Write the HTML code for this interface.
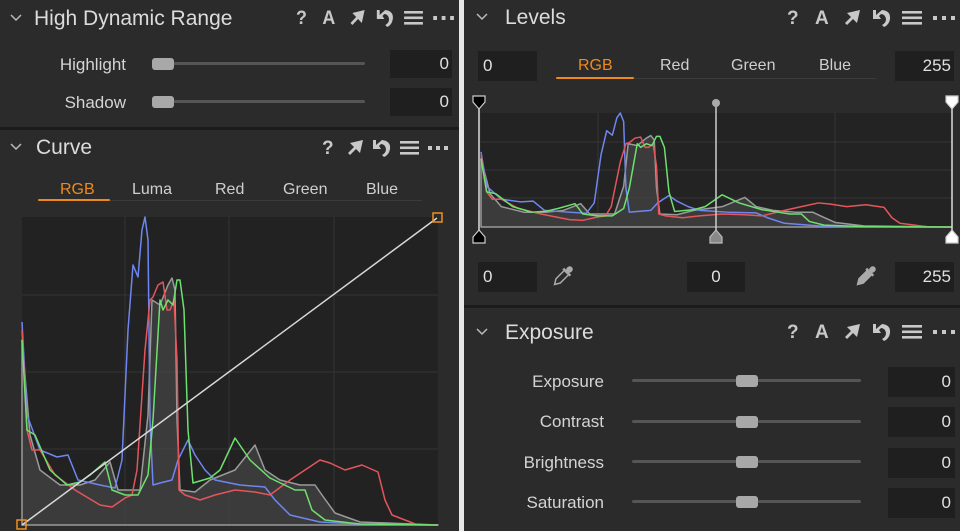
<!DOCTYPE html>
<html><head><meta charset="utf-8"><style>
*{margin:0;padding:0;box-sizing:border-box}
body{width:960px;height:531px;background:#2b2b2b;position:relative;overflow:hidden;font-family:"Liberation Sans",sans-serif;color:#d4d4d4}
.a{position:absolute;white-space:nowrap}
.h{font-size:21px;color:#dcdcdc;line-height:24px}
.l{font-size:17px;line-height:20px;text-align:right}
.box{position:absolute;background:#1f1f1f;font-size:17px;line-height:30px;color:#e0e0e0}
.tab{font-size:16px;line-height:20px;color:#cfcfcf}
.trk{position:absolute;height:3px;background:#555;border-radius:2px}
.hdl{position:absolute;width:22px;height:12px;background:#a8a8a8;border-radius:3px}
</style></head><body>
<div class="a" style="left:459px;top:0;width:5px;height:531px;background:#e6e6e6"></div>
<div class="a" style="left:0;top:127px;width:459px;height:3px;background:#1b1b1b"></div>
<div class="a" style="left:464px;top:305px;width:496px;height:3px;background:#1b1b1b"></div>

<svg class="a" style="left:0;top:0" width="960" height="531" viewBox="0 0 960 531">
<defs>
<g id="ic" fill="#c8c8c8">
  <text x="0" y="7" font-family="Liberation Sans" font-weight="bold" font-size="19" fill="#c8c8c8">?</text>
  <text x="28" y="7" font-family="Liberation Sans" font-weight="bold" font-size="19" fill="#c8c8c8">A</text>
  <path d="M58 6 L64 0 L60 -4 L73 -7 L70 6 L66 2 L60 8 Z"/>
  <path d="M86 -7 h3 v5 l6 -5 q9 1 8 9 q-1 6 -6 8 l-2 -2 q4 -2 4 -6 q-1 -5 -5 -5 l-2 2 l2 3 h-8 z"/>
  <rect x="115" y="-6" width="20" height="2.6"/><rect x="115" y="-0.5" width="20" height="2.6"/><rect x="115" y="5" width="20" height="2.6"/>
  <rect x="146" y="-1" width="4" height="4"/><rect x="155" y="-1" width="4" height="4"/><rect x="164" y="-1" width="4" height="4"/>
</g>
<g id="ic2" fill="#c8c8c8">
  <text x="0" y="7" font-family="Liberation Sans" font-weight="bold" font-size="19" fill="#c8c8c8">?</text>
  <path d="M26 6 L32 0 L28 -4 L41 -7 L38 6 L34 2 L28 8 Z"/>
  <path d="M51 -7 h3 v5 l6 -5 q9 1 8 9 q-1 6 -6 8 l-2 -2 q4 -2 4 -6 q-1 -5 -5 -5 l-2 2 l2 3 h-8 z"/>
  <rect x="78" y="-6" width="19" height="2.6"/><rect x="78" y="-0.5" width="19" height="2.6"/><rect x="78" y="5" width="19" height="2.6"/>
  <rect x="106" y="-1" width="4" height="4"/><rect x="114" y="-1" width="4" height="4"/><rect x="122" y="-1" width="4" height="4"/>
</g>
<g id="hist" fill="none" stroke-width="1.5" stroke-linejoin="round">
  <path vector-effect="non-scaling-stroke" fill="#444" fill-opacity="0.75" stroke="#9a9a9a" d="M22,340 L30,435 L40,470 L60,485 L80,485 L95,480 L110,462 L118,490 L140,490 L148,415 L152,300 L160,305 L168,285 L172,278 L175,290 L177,420 L180,490 L195,492 L210,480 L235,470 L255,445 L265,470 L280,480 L300,485 L315,485 L322,495 L335,513 L360,522 L438,525 L22,525 Z"/>
  <path vector-effect="non-scaling-stroke" stroke="#6f86f0" d="M22,322 L27,415 L40,450 L57,457 L68,455 L78,480 L100,485 L115,488 L122,460 L128,330 L133,265 L138,277 L142,230 L145,217 L148,240 L150,420 L153,485 L160,483 L172,480 L178,460 L188,440 L195,455 L205,470 L215,480 L240,485 L265,487 L275,500 L290,515 L320,522 L360,524 L438,525"/>
  <path vector-effect="non-scaling-stroke" stroke="#e5555a" d="M22,330 L27,430 L32,450 L40,450 L55,475 L75,490 L100,505 L112,507 L125,498 L132,495 L137,470 L145,350 L150,300 L153,297 L158,285 L163,282 L167,310 L170,310 L174,300 L177,360 L179,490 L185,495 L200,500 L215,495 L235,490 L255,492 L270,495 L290,480 L305,470 L320,460 L330,463 L345,470 L362,465 L378,472 L385,500 L392,515 L405,520 L418,525 L438,525"/>
  <path vector-effect="non-scaling-stroke" stroke="#6ee06e" d="M22,340 L27,430 L35,435 L50,470 L67,485 L80,482 L90,475 L105,462 L112,490 L125,495 L138,495 L148,475 L153,420 L160,300 L163,310 L168,300 L173,305 L177,280 L180,280 L184,310 L188,430 L193,483 L210,478 L220,470 L235,438 L250,460 L270,478 L295,490 L305,490 L312,510 L325,520 L360,524 L438,525"/>
</g>
<g id="drop"><rect x="-3" y="-14" width="6" height="7" rx="3" fill="#aaa"/><rect x="-5" y="-8" width="10" height="2.5" fill="#aaa"/></g>
</defs>
<use href="#ic" transform="translate(296,17) scale(0.94,1)"/>
<use href="#ic" x="787" y="17"/>
<use href="#ic" x="787" y="331"/>
<use href="#ic2" x="322" y="147"/>
<g fill="none" stroke="#bbb" stroke-width="1.5">
<path d="M11 15 l5 5 l5 -5"/><path d="M11 144 l5 5 l5 -5"/><path d="M477 14 l5 5 l5 -5"/><path d="M477 329 l5 5 l5 -5"/>
</g>
<rect x="22" y="217" width="416" height="308" fill="#222"/>
<g stroke="#343434" stroke-width="1"><path d="M125 217V525M229 217V525M334 217V525M22 295H438M22 372H438M22 449H438"/></g>
<use href="#hist"/>
<line x1="22" y1="525" x2="437" y2="218" stroke="#d8d8d8" stroke-width="1.5"/>
<rect x="17" y="520" width="9" height="9" fill="none" stroke="#f0901e" stroke-width="1.5"/>
<rect x="433" y="213" width="9" height="9" fill="none" stroke="#f0901e" stroke-width="1.5"/>
<rect x="481" y="113" width="471" height="114" fill="#232323"/>
<g stroke="#343434" stroke-width="1"><path d="M598 113V227M835 113V227M481 142H952M481 170H952M481 198H952"/></g>
<use href="#hist" transform="matrix(1.1322 0 0 0.3701 456.09 32.69)"/>
<line x1="479" y1="100" x2="479" y2="232" stroke="#ddd" stroke-width="1.5"/>
<line x1="716" y1="104" x2="716" y2="232" stroke="#ccc" stroke-width="1.5"/>
<line x1="952" y1="100" x2="952" y2="232" stroke="#ddd" stroke-width="1.5"/>
<path d="M473 96 h12 v6 l-6 7 l-6 -7 z" fill="#000" stroke="#ccc" stroke-width="1.2"/>
<path d="M946 96 h12 v6 l-6 7 l-6 -7 z" fill="#fff" stroke="#ccc" stroke-width="1.2"/>
<circle cx="716" cy="103" r="4" fill="#aaa"/>
<path d="M473 243 h12 v-6 l-6 -7 l-6 7 z" fill="#000" stroke="#ccc" stroke-width="1.2"/>
<path d="M710 243 h12 v-6 l-6 -7 l-6 7 z" fill="#888" stroke="#bbb" stroke-width="1.2"/>
<path d="M946 243 h12 v-6 l-6 -7 l-6 7 z" fill="#fff" stroke="#ccc" stroke-width="1.2"/>
<g transform="translate(562,277) rotate(45)"><use href="#drop"/><path d="M-3 -5.5 v11 l3 5 l3 -5 v-11" fill="none" stroke="#aaa" stroke-width="1.5"/></g>
<g transform="translate(865,277) rotate(45)"><use href="#drop"/><path d="M-3 -5.5 v11 l3 5 l3 -5 v-11 z" fill="#aaa" stroke="#aaa" stroke-width="1.5"/></g>
</svg>

<div class="a h" style="left:34px;top:7px">High Dynamic Range</div>
<div class="a l" style="left:20px;width:106px;top:55px">Highlight</div>
<div class="a l" style="left:20px;width:106px;top:93px">Shadow</div>
<div class="trk" style="left:152px;width:213px;top:62px"></div><div class="hdl" style="left:152px;top:58px"></div>
<div class="trk" style="left:152px;width:213px;top:100px"></div><div class="hdl" style="left:152px;top:96px"></div>
<div class="box" style="left:390px;top:50px;width:62px;height:28px;line-height:28px;text-align:right;padding-right:3px">0</div>
<div class="box" style="left:390px;top:88px;width:62px;height:28px;line-height:28px;text-align:right;padding-right:3px">0</div>
<div class="a h" style="left:36px;top:136px">Curve</div>
<div class="a tab" style="left:60px;top:180px;color:#ee8a1c">RGB</div>
<div class="a tab" style="left:132px;top:180px">Luma</div>
<div class="a tab" style="left:215px;top:180px">Red</div>
<div class="a tab" style="left:283px;top:180px">Green</div>
<div class="a tab" style="left:366px;top:180px">Blue</div>
<div class="a" style="left:38px;top:200px;width:384px;height:1px;background:#3c3c3c"></div>
<div class="a" style="left:38px;top:199px;width:72px;height:2px;background:#ee8a1c;border-radius:1px"></div>
<div class="a h" style="left:505px;top:6px">Levels</div>
<div class="box" style="left:478px;top:51px;width:59px;height:30px;padding-left:5px">0</div>
<div class="a tab" style="left:578px;top:56px;color:#ee8a1c">RGB</div>
<div class="a tab" style="left:660px;top:56px">Red</div>
<div class="a tab" style="left:731px;top:56px">Green</div>
<div class="a tab" style="left:819px;top:56px">Blue</div>
<div class="a" style="left:556px;top:78px;width:320px;height:1px;background:#3c3c3c"></div>
<div class="a" style="left:556px;top:77px;width:78px;height:2px;background:#ee8a1c;border-radius:1px"></div>
<div class="box" style="left:895px;top:51px;width:59px;height:30px;text-align:right;padding-right:3px">255</div>
<div class="box" style="left:478px;top:262px;width:59px;height:30px;padding-left:5px">0</div>
<div class="box" style="left:687px;top:262px;width:58px;height:30px;text-align:center">0</div>
<div class="box" style="left:895px;top:262px;width:59px;height:30px;text-align:right;padding-right:3px">255</div>
<div class="a h" style="left:505px;top:321px">Exposure</div>
<div class="a l" style="left:480px;width:124px;top:372px">Exposure</div>
<div class="a l" style="left:480px;width:124px;top:412px">Contrast</div>
<div class="a l" style="left:480px;width:124px;top:453px">Brightness</div>
<div class="a l" style="left:480px;width:124px;top:493px">Saturation</div>
<div class="trk" style="left:632px;width:229px;top:379px"></div><div class="hdl" style="left:736px;top:375px"></div>
<div class="trk" style="left:632px;width:229px;top:420px"></div><div class="hdl" style="left:736px;top:416px"></div>
<div class="trk" style="left:632px;width:229px;top:460px"></div><div class="hdl" style="left:736px;top:456px"></div>
<div class="trk" style="left:632px;width:229px;top:500px"></div><div class="hdl" style="left:736px;top:496px"></div>
<div class="box" style="left:888px;top:367px;width:67px;height:30px;text-align:right;padding-right:4px">0</div>
<div class="box" style="left:888px;top:407px;width:67px;height:30px;text-align:right;padding-right:4px">0</div>
<div class="box" style="left:888px;top:448px;width:67px;height:30px;text-align:right;padding-right:4px">0</div>
<div class="box" style="left:888px;top:488px;width:67px;height:30px;text-align:right;padding-right:4px">0</div>
</body></html>
